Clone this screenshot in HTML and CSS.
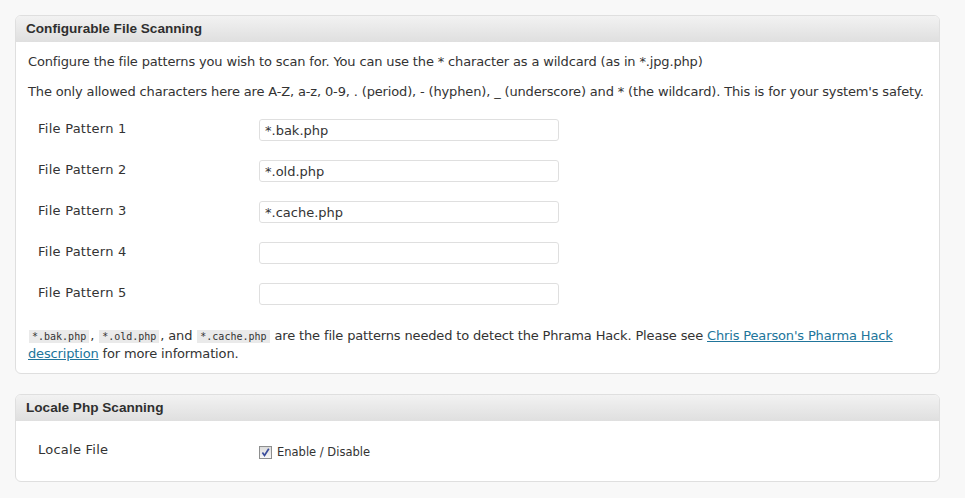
FILE: index.html
```html
<!DOCTYPE html>
<html lang="en">
<head>
<meta charset="utf-8">
<title>Scanning settings</title>
<link rel="stylesheet" href="styles.css">
</head>
<body>
<div class="wrap">
  <section class="postbox">
    <h3 class="hndle">Configurable File Scanning</h3>
    <div class="inside">
      <p class="first">Configure the file patterns you wish to scan for. You can use the * character as a wildcard (as in *.jpg.php)</p>
      <p class="last">The only allowed characters here are A-Z, a-z, 0-9, . (period), - (hyphen), _ (underscore) and * (the wildcard). This is for your system's safety.</p>
      <div class="form-table">
        <div class="row"><label class="th" for="p1">File Pattern 1</label><div class="td"><input id="p1" type="text" value="*.bak.php"></div></div>
        <div class="row"><label class="th" for="p2">File Pattern 2</label><div class="td"><input id="p2" type="text" value="*.old.php"></div></div>
        <div class="row"><label class="th" for="p3">File Pattern 3</label><div class="td"><input id="p3" type="text" value="*.cache.php"></div></div>
        <div class="row"><label class="th" for="p4">File Pattern 4</label><div class="td"><input id="p4" type="text" value=""></div></div>
        <div class="row"><label class="th" for="p5">File Pattern 5</label><div class="td"><input id="p5" type="text" value=""></div></div>
      </div>
      <p class="note"><code>*.bak.php</code>, <code>*.old.php</code>, and <code>*.cache.php</code> are the file patterns needed to detect the Phrama Hack. Please see <a href="#">Chris Pearson's Pharma Hack description</a> for more information.</p>
    </div>
  </section>

  <section class="postbox">
    <h3 class="hndle">Locale Php Scanning</h3>
    <div class="inside inside-small">
      <div class="form-table">
        <div class="row"><span class="th">Locale File</span><div class="td"><label class="check"><span class="box"><svg width="9" height="9" viewBox="0 0 9 9"><path d="M1.4 4.6 L3.5 7.4 L7.8 0.8" fill="none" stroke="#3a4d9c" stroke-width="1.7"/></svg></span>Enable / Disable</label></div></div>
      </div>
    </div>
  </section>
</div>
</body>
</html>
```

FILE: styles.css
```css
html, body {
  margin: 0;
  padding: 0;
  background: #f8f8f8;
}
body {
  font-family: "DejaVu Sans", Verdana, sans-serif;
  font-size: 13px;
  line-height: 17px;
  color: #333;
}
.wrap {
  padding: 15px 25px 0 15px;
}
.postbox {
  background: #fff;
  border: 1px solid #dfdfdf;
  border-radius: 6px;
  margin-bottom: 20px;
  overflow: hidden;
}
.hndle {
  margin: 0;
  height: 26px;
  line-height: 26px;
  padding: 0 10px;
  font-family: "Liberation Sans", Arial, sans-serif;
  font-size: 13.6px;
  font-weight: bold;
  color: #2f2f2f;
  background: linear-gradient(to bottom, #f2f2f2, #dfdfdf);
}
.inside {
  padding: 0 12px 11px 12px;
}
.inside-small {
  padding: 0 12px 8px 12px;
}
.inside p {
  margin: 13px 0;
  letter-spacing: -0.15px;
}
.inside p.first {
  margin-top: 11px;
}
.inside p.last {
  margin-bottom: 11px;
}
.row {
  display: flex;
  height: 41px;
}
.form-table {
  margin-top: 11px;
}
.th {
  width: 221px;
  padding: 9px 0 0 10px;
  line-height: 17px;
  letter-spacing: 0.25px;
}
.td {
  padding-top: 8px;
}
.td input {
  box-sizing: border-box;
  width: 300px;
  height: 22px;
  margin: 0;
  padding: 1px 5px;
  border: 1px solid #dfdfdf;
  border-radius: 3px;
  font-family: "DejaVu Sans", Verdana, sans-serif;
  font-size: 13px;
  color: #333;
  background: #fff;
  outline: none;
}
.inside p.note {
  margin-top: 11px;
  margin-bottom: 0;
}
code {
  font-family: "DejaVu Sans Mono", monospace;
  font-size: 10px;
  letter-spacing: 0;
  background: #eaeaea;
  padding: 1px 3px;
  margin: 0 1px;
  color: #333;
}
a {
  color: #21759b;
  text-decoration: underline;
}
.check {
  display: flex;
  align-items: center;
  font-size: 11.5px;
  letter-spacing: 0;
  color: #333;
  padding-top: 4px;
}
.box {
  box-sizing: border-box;
  width: 13px;
  height: 13px;
  border: 1px solid #8e8f8f;
  background: linear-gradient(to bottom, #dcdcdc, #f7f7f7);
  margin-right: 5px;
  display: flex;
  align-items: center;
  justify-content: center;
}
```
